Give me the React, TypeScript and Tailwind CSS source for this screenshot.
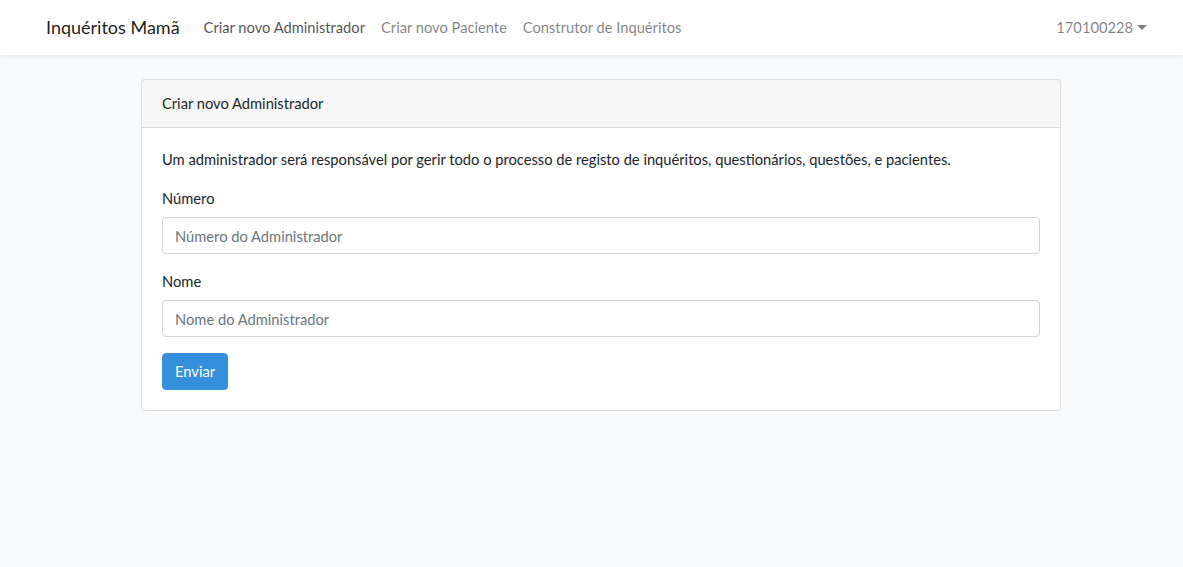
export default function App() {
  return (
    <div className="min-h-[567px] bg-[#f8fafc] font-['Lato','Noto_Sans',sans-serif] text-[14.7px] leading-[23px] text-[#212529]">
      <nav className="h-[55px] bg-white shadow-[0_2px_4px_rgba(0,0,0,0.075)] flex items-center justify-between pl-[46px] pr-[36px]">
        <div className="flex items-center">
          <a className="text-[18px] text-black/90 mr-4">Inquéritos Mamã</a>
          <a className="px-2 text-black/70">Criar novo Administrador</a>
          <a className="px-2 text-black/50">Criar novo Paciente</a>
          <a className="px-2 text-black/50">Construtor de Inquéritos</a>
        </div>
        <a className="flex items-center text-black/50">
          170100228
          <span className="ml-[4px] border-t-[5px] border-x-[5px] border-x-transparent border-t-black/50 w-0 h-0" />
        </a>
      </nav>

      <main className="py-6">
        <div className="ml-[141px] w-[920px] bg-white border border-black/[0.125] rounded">
          <div className="h-[48px] px-5 flex items-center bg-black/[0.03] border-b border-black/[0.125]">
            Criar novo Administrador
          </div>
          <div className="p-5">
            <p className="mb-4">
              Um administrador será responsável por gerir todo o processo de registo de inquéritos, questionários, questões, e pacientes.
            </p>
            <div className="mb-4">
              <label className="block mb-[7px]">Número</label>
              <input
                className="w-full h-[37px] px-3 border border-[#ced4da] rounded placeholder:text-[#6c757d] outline-none"
                placeholder="Número do Administrador"
              />
            </div>
            <div className="mb-4">
              <label className="block mb-[7px]">Nome</label>
              <input
                className="w-full h-[37px] px-3 border border-[#ced4da] rounded placeholder:text-[#6c757d] outline-none"
                placeholder="Nome do Administrador"
              />
            </div>
            <button className="h-[37px] px-3 bg-[#3490dc] border border-[#3490dc] text-white rounded">
              Enviar
            </button>
          </div>
        </div>
      </main>
    </div>
  );
}
